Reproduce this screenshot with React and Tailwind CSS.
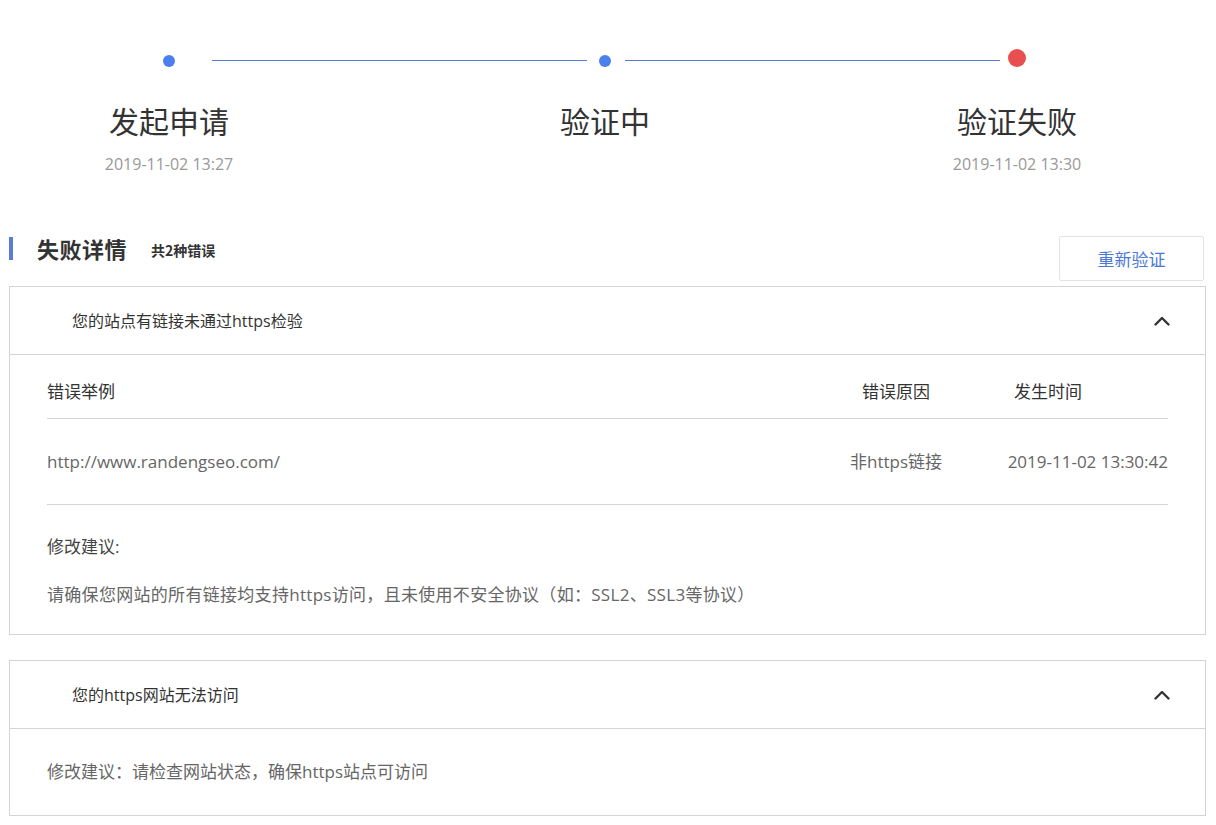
import React from "react";

function Chevron() {
  return (
    <svg width="16" height="10" viewBox="0 0 16 10" className="block">
      <polyline points="1.5,8.5 8,2 14.5,8.5" fill="none" stroke="#333" strokeWidth="2.4" strokeLinecap="round" strokeLinejoin="round" />
    </svg>
  );
}

function CardHeader({ title }) {
  return (
    <div className="h-[68px] flex items-center justify-between border-b border-[#d4d4d4] pl-[62px] pr-[35px]">
      <span className="text-[16px] leading-[24px] text-[#333]">{title}</span>
      <Chevron />
    </div>
  );
}

export default function App() {
  return (
    <div className="w-[1216px] min-h-[825px] bg-white font-['Open_Sans','Noto_Sans_CJK_SC',sans-serif] pl-[9px] pr-[10px]">
      {/* steps */}
      <div className="pt-[49px]">
        <div className="flex items-end h-[18px]">
          <div className="ml-[154px] w-[12px] h-[12px] rounded-full bg-[#4a80ee]" />
          <div className="ml-[37px] w-[375px] h-px mb-[6px] bg-[#5a78cf]" />
          <div className="ml-[12px] w-[12px] h-[12px] rounded-full bg-[#4a80ee]" />
          <div className="ml-[14px] w-[375px] h-px mb-[6px] bg-[#5a78cf]" />
          <div className="ml-[8px] w-[18px] h-[18px] rounded-full bg-[#e8504f]" />
        </div>
        <div className="flex mt-[33px]">
          <div className="ml-[60px] w-[200px] flex flex-col items-center">
            <div className="text-[30px] leading-[40px] text-[#333] font-['Noto_Sans_CJK_SC',sans-serif]">发起申请</div>
            <div className="mt-[14px] text-[16px] leading-[20px] text-[#999]">2019-11-02 13:27</div>
          </div>
          <div className="ml-[236px] w-[200px] flex flex-col items-center">
            <div className="text-[30px] leading-[40px] text-[#333] font-['Noto_Sans_CJK_SC',sans-serif]">验证中</div>
          </div>
          <div className="ml-[212px] w-[200px] flex flex-col items-center">
            <div className="text-[30px] leading-[40px] text-[#333] font-['Noto_Sans_CJK_SC',sans-serif]">验证失败</div>
            <div className="mt-[14px] text-[16px] leading-[20px] text-[#999]">2019-11-02 13:30</div>
          </div>
        </div>
      </div>

      {/* heading */}
      <div className="mt-[62px] flex items-start justify-between">
        <div className="flex items-start">
          <div className="mt-[1px] w-[4px] h-[23px] bg-[#5b7bd8]" />
          <div className="ml-[24px] text-[22px] leading-[24px] font-bold text-[#333] font-['Noto_Sans_CJK_SC',sans-serif] tracking-[0.5px]">失败详情</div>
          <div className="ml-[24px] mt-[2px] text-[14px] leading-[24px] font-bold text-[#333] font-['Noto_Sans_CJK_SC',sans-serif]">共2种错误</div>
        </div>
        <button className="mr-[2px] w-[145px] h-[45px] border border-[#e3e3e3] rounded-[2px] text-[17px] text-[#4a78d6] font-['Noto_Sans_CJK_SC',sans-serif] bg-white">
          重新验证
        </button>
      </div>

      {/* card 1 */}
      <div className="mt-[5px] border border-[#d4d4d4]">
        <CardHeader title="您的站点有链接未通过https检验" />
        <div className="px-[37px] text-[17px]">
          <div className="h-[64px] pt-[25px] border-b border-[#d4d4d4] flex leading-[24px] text-[#333]">
            <div className="flex-1">错误举例</div>
            <div className="w-[130px] text-center">错误原因</div>
            <div className="w-[207px] pl-[53px]">发生时间</div>
          </div>
          <div className="h-[86px] border-b border-[#d4d4d4] flex items-center leading-[24px] text-[#666]">
            <div className="flex-1">http://www.randengseo.com/</div>
            <div className="w-[130px] text-center">非https链接</div>
            <div className="w-[207px] text-right">2019-11-02 13:30:42</div>
          </div>
          <div className="pt-[30px] leading-[24px] text-[#444]">修改建议:</div>
          <div className="mt-[24px] pb-[27px] leading-[24px] text-[#666] tracking-[0.3px]">
            请确保您网站的所有链接均支持https访问，且未使用不安全协议（如：SSL2、SSL3等协议）
          </div>
        </div>
      </div>

      {/* card 2 */}
      <div className="mt-[25px] border border-[#d4d4d4]">
        <CardHeader title="您的https网站无法访问" />
        <div className="h-[86px] px-[37px] flex items-center text-[17px] leading-[24px] text-[#666]">
          修改建议：请检查网站状态，确保https站点可访问
        </div>
      </div>
    </div>
  );
}
